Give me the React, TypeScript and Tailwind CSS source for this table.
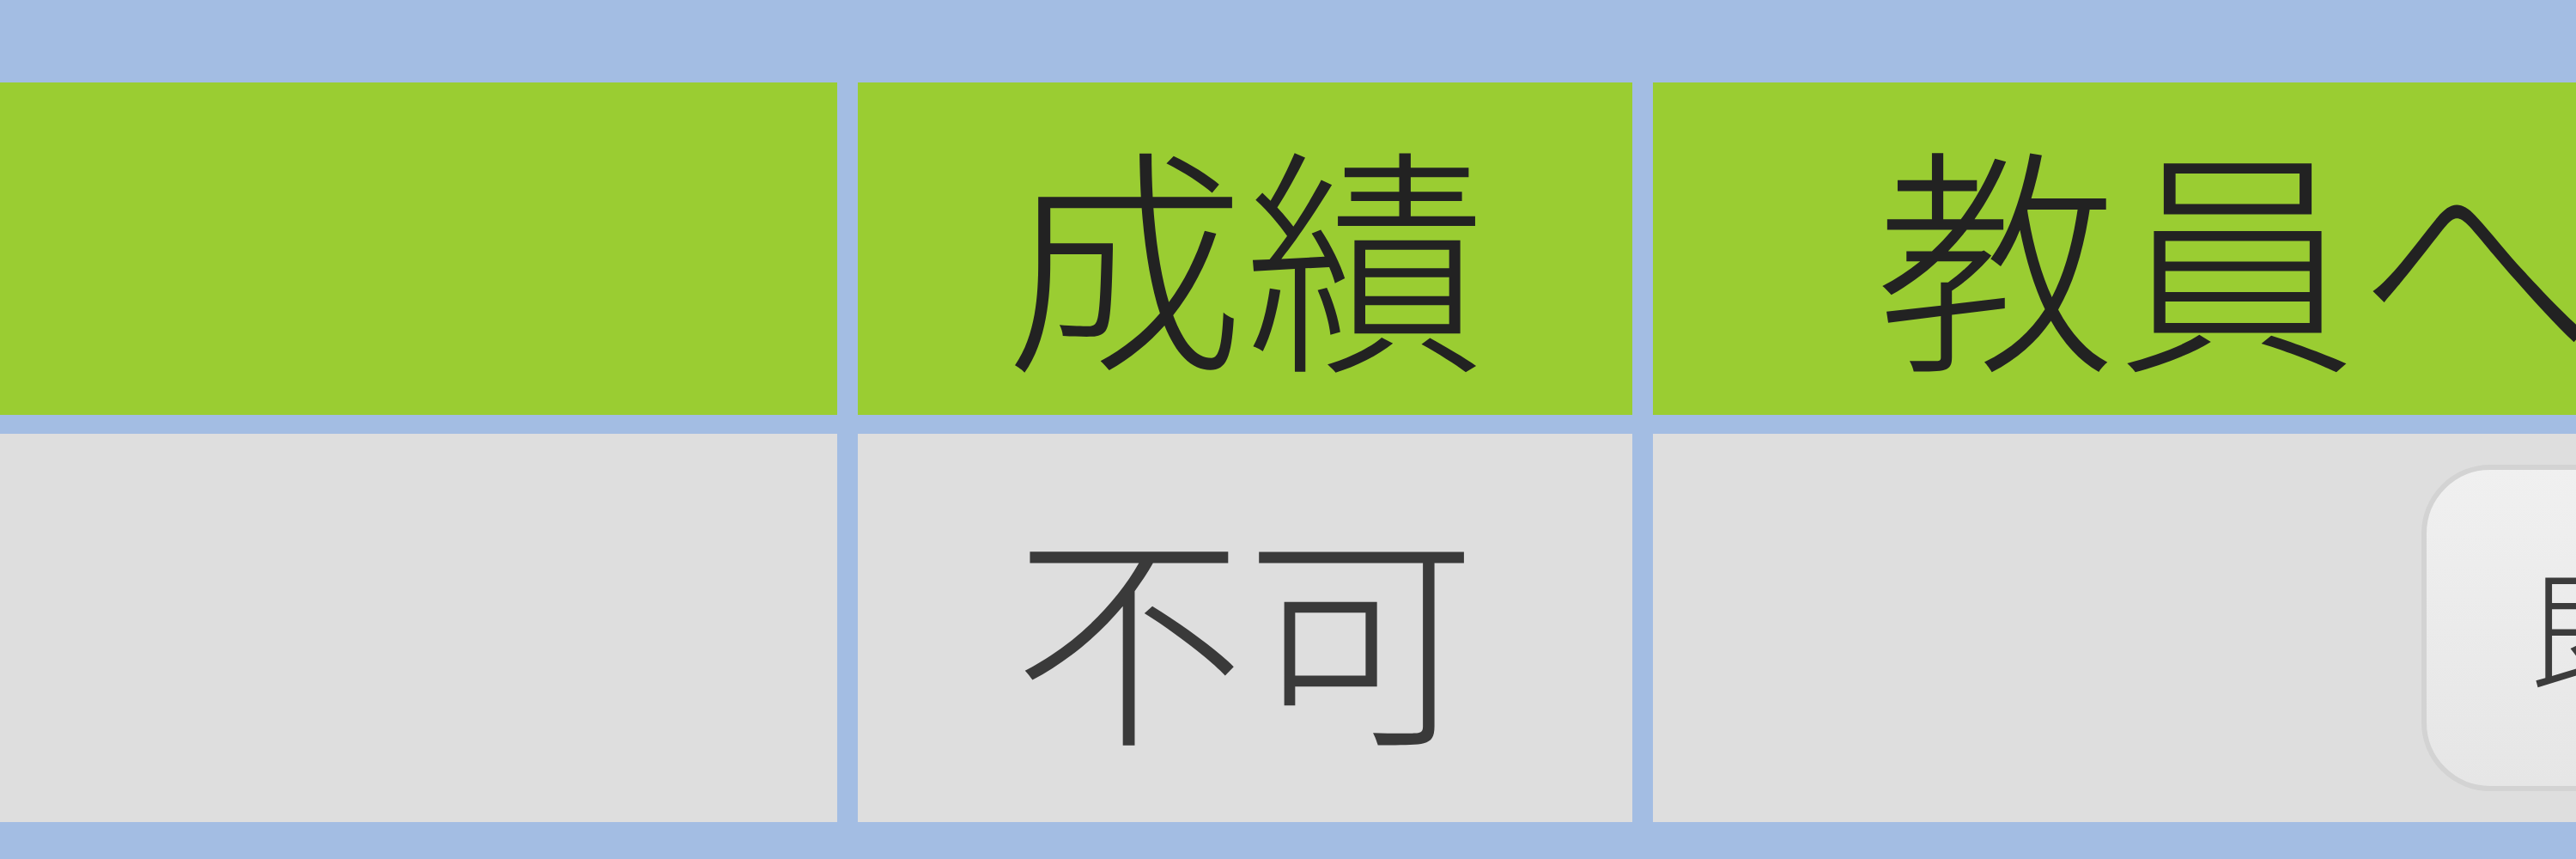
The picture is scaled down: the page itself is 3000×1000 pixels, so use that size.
export default function App() {
  return (
    <main className="h-[1000px] w-[3000px] overflow-hidden bg-[#a3bde3] pt-[96px] font-['Noto_Sans_CJK_JP',sans-serif]">
      <div className="grid grid-cols-[975px_902px_2400px] grid-rows-[387px_452px] gap-x-[24px] gap-y-[22px]">
        {/* header row */}
        <div className="bg-[#9acd32]" />
        <div className="flex items-center justify-center bg-[#9acd32] text-[280px] font-light leading-none text-[#222222]">
          成績
        </div>
        <div className="flex items-center whitespace-nowrap bg-[#9acd32] pl-[260px] text-[280px] font-light leading-none text-[#222222]">
          教員への連絡
        </div>

        {/* body row */}
        <div className="bg-[#dedede]" />
        <div className="flex items-center justify-center bg-[#dedede] text-[270px] font-light leading-none text-[#3a3a3a]">
          不可
        </div>
        <div className="flex items-center bg-[#dedede] pl-[895px]">
          <button className="flex h-[380px] items-center whitespace-nowrap rounded-[80px] border-[6px] border-[#d3d3d3] bg-gradient-to-b from-[#f0f0f0] to-[#e6e6e6] pl-[120px] pr-[125px] text-[165px] font-light leading-none text-[#3c3c3c]">
            既読
          </button>
        </div>
      </div>
    </main>
  );
}
